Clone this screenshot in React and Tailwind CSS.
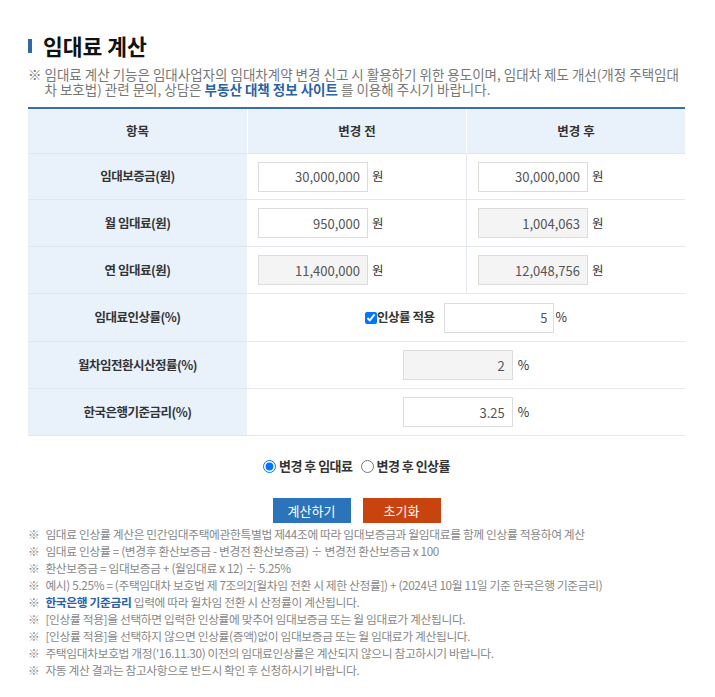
import React from 'react';

const rows = [
  { label: '임대보증금(원)', before: '30,000,000', after: '30,000,000', beforeRo: false, afterRo: false, h: 'h-[46px]' },
  { label: '월 임대료(원)', before: '950,000', after: '1,004,063', beforeRo: false, afterRo: true, h: 'h-[47px]' },
  { label: '연 임대료(원)', before: '11,400,000', after: '12,048,756', beforeRo: true, afterRo: true, h: 'h-[47px]' },
];

const notes = [
  '임대료 인상률 계산은 민간임대주택에관한특별법 제44조에 따라 임대보증금과 월임대료를 함께 인상률 적용하여 계산',
  '임대료 인상률 = (변경후 환산보증금 - 변경전 환산보증금) ÷ 변경전 환산보증금 x 100',
  '환산보증금 = 임대보증금 + (월임대료 x 12) ÷ 5.25%',
  '예시) 5.25% = (주택임대차 보호법 제 7조의2[월차임 전환 시 제한 산정률]) + (2024년 10월 11일 기준 한국은행 기준금리)',
  null,
  '[인상률 적용]을 선택하면 입력한 인상률에 맞추어 임대보증금 또는 월 임대료가 계산됩니다.',
  '[인상률 적용]을 선택하지 않으면 인상률(증액)없이 임대보증금 또는 월 임대료가 계산됩니다.',
  "주택임대차보호법 개정('16.11.30) 이전의 임대료인상률은 계산되지 않으니 참고하시기 바랍니다.",
  '자동 계산 결과는 참고사항으로 반드시 확인 후 신청하시기 바랍니다.',
];

function NumInput({ value, readOnly }) {
  return (
    <input
      type="text"
      defaultValue={value}
      readOnly={readOnly}
      className={`w-[110px] h-[30px] border border-[#dcdcdc] text-right pr-[7px] text-[13px] text-[#555] outline-none ${readOnly ? 'bg-[#f4f4f4]' : 'bg-white'}`}
    />
  );
}

function Label({ children, h = 'h-[47px]' }) {
  return (
    <div className={`${h} bg-[#e9f1fb] border-b border-[#dfe6ee] flex items-center justify-center text-[12.5px] font-bold text-[#333] tracking-[-0.04em]`}>
      {children}
    </div>
  );
}

export default function App() {
  return (
    <div className="w-[715px] bg-white pl-[28px] pr-[30px] pt-[32px] pb-[20px] font-['Noto_Sans_CJK_KR',sans-serif] text-[#333]">
      <h2 className="flex items-center gap-[11px] text-[21.5px] leading-[27px] font-bold text-[#111]">
        <span className="w-[4px] h-[14px] bg-[#2f6aa5]" />
        임대료 계산
      </h2>

      <div className="mt-[8px] flex gap-[3px] text-[13.5px] leading-[15px] text-[#777]">
        <span>※</span>
        <p>
          임대료 계산 기능은 임대사업자의 임대차계약 변경 신고 시 활용하기 위한 용도이며, 임대차 제도 개선(개정 주택임대
          <br />
          차 보호법) 관련 문의, 상담은 <span className="font-bold text-[#2a62a5]">부동산 대책 정보 사이트</span> 를 이용해 주시기 바랍니다.
        </p>
      </div>

      <div className="mt-[10px] grid grid-cols-[219px_219px_219px] border-t-2 border-[#3a6ea5]">
        <div className="h-[45px] bg-[#e9f1fb] border-b border-[#dfe6ee] flex items-center justify-center text-[12.5px] font-bold">항목</div>
        <div className="h-[45px] bg-[#e9f1fb] border-b border-l border-[#dfe6ee] border-l-white flex items-center justify-center text-[12.5px] font-bold">변경 전</div>
        <div className="h-[45px] bg-[#e9f1fb] border-b border-l border-[#dfe6ee] border-l-white flex items-center justify-center text-[12.5px] font-bold">변경 후</div>

        {rows.map((r) => (
          <React.Fragment key={r.label}>
            <Label h={r.h}>{r.label}</Label>
            <div className={`${r.h} border-b border-[#e3e8ee] flex items-center pl-[11px] gap-[4px] text-[12.5px]`}>
              <NumInput value={r.before} readOnly={r.beforeRo} />
              <span>원</span>
            </div>
            <div className={`${r.h} border-b border-l border-[#e3e8ee] flex items-center pl-[11px] gap-[4px] text-[12.5px]`}>
              <NumInput value={r.after} readOnly={r.afterRo} />
              <span>원</span>
            </div>
          </React.Fragment>
        ))}

        <Label h="h-[48px]">임대료인상률(%)</Label>
        <div className="col-span-2 h-[48px] border-b border-[#e3e8ee] flex items-center justify-center text-[12.5px]">
          <input type="checkbox" defaultChecked className="w-[12px] h-[12px] m-0" />
          <span className="font-bold tracking-[-0.04em]">인상률 적용</span>
          <input type="text" defaultValue="5" className="ml-[10px] w-[110px] h-[30px] border border-[#dcdcdc] text-right pr-[6px] text-[13px] text-[#555] outline-none" />
          <span className="ml-[1px]">%</span>
        </div>

        <Label>월차임전환시산정률(%)</Label>
        <div className="col-span-2 h-[47px] border-b border-[#e3e8ee] flex items-center justify-center gap-[5px] text-[12.5px]">
          <NumInput value="2" readOnly />
          <span>%</span>
        </div>

        <Label>한국은행기준금리(%)</Label>
        <div className="col-span-2 h-[47px] border-b border-[#e3e8ee] flex items-center justify-center gap-[5px] text-[12.5px]">
          <NumInput value="3.25" />
          <span>%</span>
        </div>
      </div>

      <div className="mt-[20px] h-[20px] flex items-center justify-center text-[13px] font-bold tracking-[-0.04em]">
        <label className="flex items-center gap-[3px]">
          <input type="radio" name="mode" defaultChecked className="m-0 w-[13px] h-[13px]" />
          변경 후 임대료
        </label>
        <label className="ml-[8px] flex items-center gap-[3px]">
          <input type="radio" name="mode" className="m-0 w-[13px] h-[13px]" />
          변경 후 인상률
        </label>
      </div>

      <div className="mt-[22px] flex justify-center gap-[12px] text-[13px] text-white">
        <button className="w-[78px] h-[25px] bg-[#2b73ba]">계산하기</button>
        <button className="w-[78px] h-[25px] bg-[#c9430f]">초기화</button>
      </div>

      <ul className="mt-[2px] text-[11.75px] leading-[17px] text-[#888] tracking-[-0.03em]">
        {notes.map((n, i) => (
          <li key={i} className="flex gap-[6px]">
            <span>※</span>
            {n === null ? (
              <span>
                <span className="font-bold text-[#2a62a5]">한국은행 기준금리</span> 입력에 따라 월차임 전환 시 산정률이 계산됩니다.
              </span>
            ) : (
              <span>{n}</span>
            )}
          </li>
        ))}
      </ul>
    </div>
  );
}
